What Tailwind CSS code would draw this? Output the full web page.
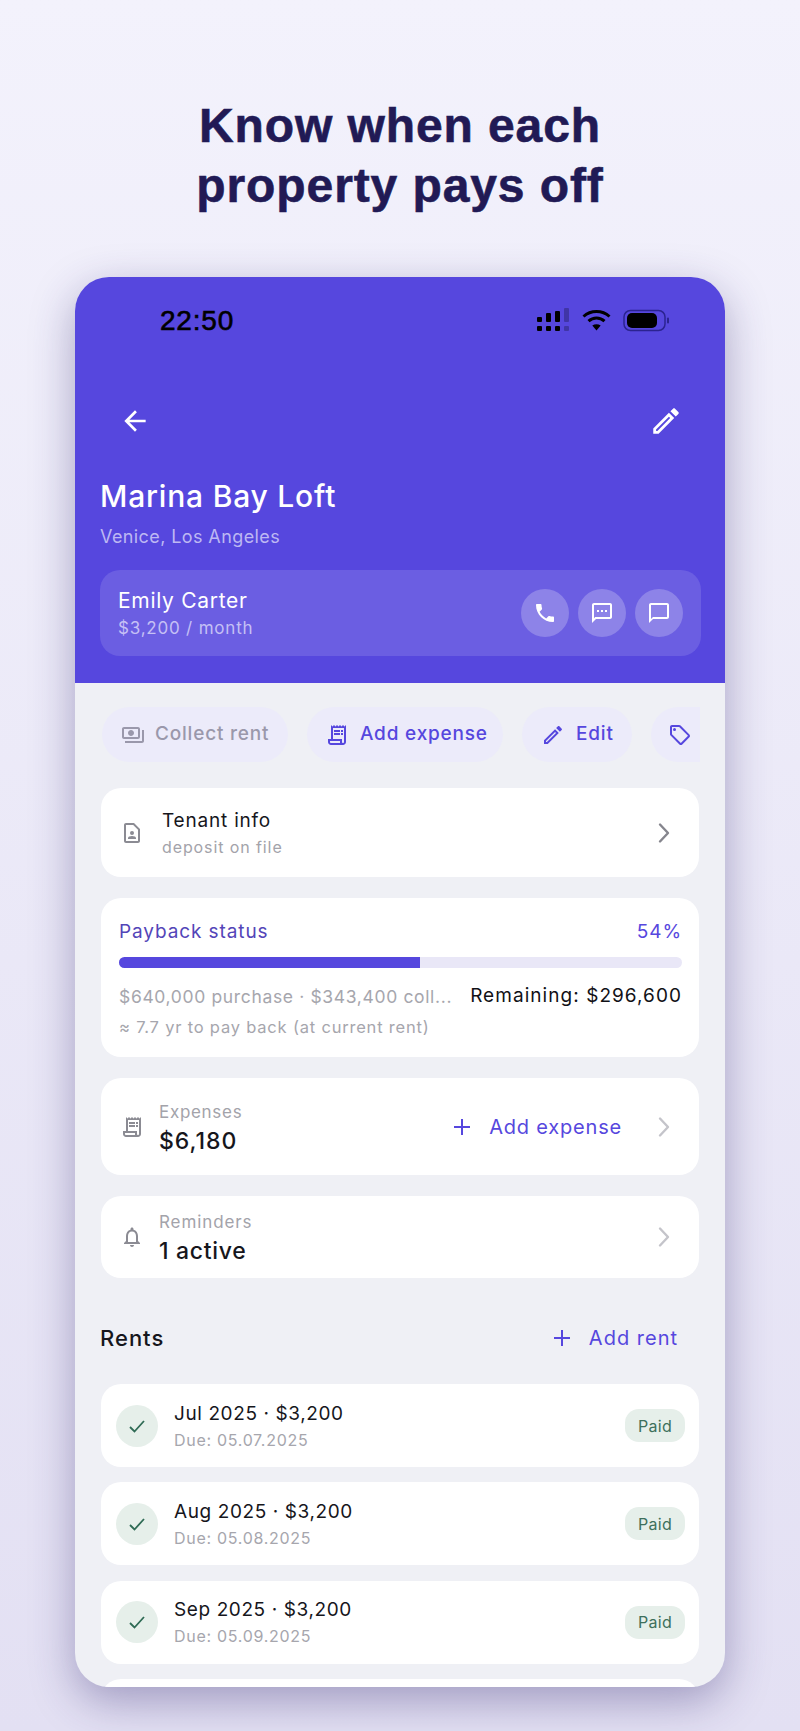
<!DOCTYPE html>
<html><head><meta charset="utf-8"><script src="https://cdn.jsdelivr.net/npm/@tailwindcss/browser@4"></script></head>
<body class="m-0">
<div class="w-[800px] h-[1731px] overflow-hidden bg-gradient-to-b from-[#f3f2fc] to-[#e3e0f3] flex flex-col items-center font-['Inter',sans-serif]">
  <h1 class="mt-[96px] h-[121px] text-center font-['Liberation_Sans',sans-serif] font-bold text-[48px] leading-[60px] tracking-[0.9px] text-[#211a55] [-webkit-text-stroke:0.6px_#211a55]">Know when each<br>property pays off</h1>
  <div class="mt-[60px] w-[650px] h-[1410px] rounded-[34px] overflow-hidden bg-[#eff0f5] shrink-0 shadow-[0_14px_44px_rgba(50,40,110,0.38)] relative z-0">
    <header class="h-[406px] bg-[#5647de] px-[25px] flex flex-col">
      <div class="h-[110px] pt-[28px] flex items-start justify-between pl-[60px] pr-[31px]">
        <span class="font-['Liberation_Sans',sans-serif] text-[28px] leading-[32px] tracking-[0.8px] text-black [-webkit-text-stroke:0.6px_#000]">22:50</span>
        <div class="flex items-center gap-[12px] pt-[3px]">
          <svg width="33" height="24" viewBox="0 0 33 24" fill="#000"><rect x="0" y="9" width="5" height="5" rx="1"/><rect x="9" y="5" width="5" height="9" rx="1"/><rect x="18" y="3" width="5" height="11" rx="1"/><rect x="27" y="0" width="5" height="14" rx="1" opacity=".25"/><rect x="0" y="18" width="5" height="5" rx="1"/><rect x="9" y="18" width="5" height="5" rx="1"/><rect x="18" y="18" width="5" height="5" rx="1"/><rect x="27" y="18" width="5" height="5" rx="1" opacity=".25"/></svg>
          <svg width="29" height="24" viewBox="0 0 29 24" fill="none" stroke="#000" stroke-width="3"><path d="M1.5 8.5C8.8 1.8 20.2 1.8 27.5 8.5"/><path d="M6.5 13.2c4.6-4.2 11.4-4.2 16 0"/><path d="M14.5 22.5l-4.2-5c2.5-1.8 5.9-1.8 8.4 0z" fill="#000" stroke="none"/></svg>
          <svg width="46" height="24" viewBox="0 0 46 24"><rect x="1" y="2.5" width="41" height="20" rx="6.5" fill="none" stroke="#2b2390" stroke-width="1.5"/><rect x="4" y="5" width="30" height="15" rx="5" fill="#000"/><rect x="44" y="9.5" width="2" height="6" rx="1" fill="#2b2390"/></svg>
        </div>
      </div>
      <div class="h-[68px] flex items-center justify-between">
        <svg class="ml-[19px]" width="32" height="32" viewBox="0 0 24 24" fill="#fff"><path d="M20 11H7.83l5.59-5.59L12 4l-8 8 8 8 1.41-1.41L7.83 13H20v-2z"/></svg>
        <svg class="mr-[17px]" width="34" height="34" viewBox="0 0 24 24" fill="#fff"><path d="M3 17.25V21h3.75L17.81 9.94l-3.75-3.75L3 17.25zM5.92 19H5v-.92l9.06-9.06.92.92L5.92 19zM20.71 5.63l-2.34-2.34c-.2-.2-.45-.29-.71-.29s-.51.1-.7.29l-1.83 1.83 3.75 3.75 1.83-1.83c.39-.39.39-1.02 0-1.41z"/></svg>
      </div>
      <div class="mt-[21px] text-[30px] leading-[40px] font-medium text-white tracking-[0.8px]">Marina Bay Loft</div>
      <div class="mt-[9px] text-[18px] leading-[24px] text-[#bdb8f3] tracking-[0.4px]">Venice, Los Angeles</div>
      <div class="mt-[21px] h-[86px] w-[601px] rounded-[20px] bg-[#6b5ee2] flex items-center justify-between pl-[18px] pr-[18px]">
        <div>
          <div class="text-[21px] leading-[28px] text-white tracking-[0.7px]">Emily Carter</div>
          <div class="mt-[2px] text-[17px] leading-[22px] text-[#c5c0f5] tracking-[0.8px]">$3,200 / month</div>
        </div>
        <div class="flex gap-[9px]">
          <div class="w-[48px] h-[48px] rounded-full bg-[#8d83e8] flex items-center justify-center"><svg width="24" height="24" viewBox="0 0 24 24" fill="#fff"><path d="M6.62 10.79c1.44 2.83 3.76 5.14 6.59 6.59l2.2-2.2c.27-.27.67-.36 1.02-.24 1.12.37 2.33.57 3.57.57.55 0 1 .45 1 1V20c0 .55-.45 1-1 1-9.39 0-17-7.61-17-17 0-.55.45-1 1-1h3.5c.55 0 1 .45 1 1 0 1.25.2 2.45.57 3.57.11.35.03.74-.25 1.02l-2.2 2.2z"/></svg></div>
          <div class="w-[48px] h-[48px] rounded-full bg-[#8d83e8] flex items-center justify-center"><svg width="24" height="24" viewBox="0 0 24 24" fill="#fff"><path d="M20 2H4c-1.1 0-1.99.9-1.99 2L2 22l4-4h14c1.1 0 2-.9 2-2V4c0-1.1-.9-2-2-2zm0 14H5.17L4 17.17V4h16v12zM7 9h2v2H7zm4 0h2v2h-2zm4 0h2v2h-2z"/></svg></div>
          <div class="w-[48px] h-[48px] rounded-full bg-[#8d83e8] flex items-center justify-center"><svg width="24" height="24" viewBox="0 0 24 24" fill="#fff"><path d="M20 2H4c-1.1 0-2 .9-2 2v18l4-4h14c1.1 0 2-.9 2-2V4c0-1.1-.9-2-2-2zm0 14H6l-2 2V4h16v12z"/></svg></div>
        </div>
      </div>
    </header>
    <main class="px-[26px] flex flex-col">
      <div class="mt-[24px] h-[55px] ml-[1px] w-[598px] overflow-hidden flex gap-[19px] text-[19px] tracking-[0.8px] font-medium text-[#5647de]">
        <div class="shrink-0 w-[186px] h-full rounded-full bg-[#ecebfa] flex items-center pl-[19px] gap-[10px] text-[#9a98ab]">
          <svg class="w-[24px] h-[24px]" viewBox="0 0 24 24" fill="#9a98ab"><path d="M19 14V6c0-1.1-.9-2-2-2H3c-1.1 0-2 .9-2 2v8c0 1.1.9 2 2 2h14c1.1 0 2-.9 2-2zm-2 0H3V6h14v8zm-7-7c-1.66 0-3 1.34-3 3s1.34 3 3 3 3-1.34 3-3-1.34-3-3-3zm13 0v11c0 1.1-.9 2-2 2H4v-2h17V7h2z"/></svg>Collect rent</div>
        <div class="shrink-0 w-[196px] h-full rounded-full bg-[#ecebfa] flex items-center pl-[18px] gap-[11px]">
          <svg class="w-[24px] h-[24px]" viewBox="0 0 24 24" fill="#5647de"><path d="M19.5 3.5L18 2l-1.5 1.5L15 2l-1.5 1.5L12 2l-1.5 1.5L9 2 7.5 3.5 6 2v14H3v3c0 1.66 1.34 3 3 3h12c1.66 0 3-1.34 3-3V2l-1.5 1.5zM15 20H6c-.55 0-1-.45-1-1v-1h10v2zm4-1c0 .55-.45 1-1 1s-1-.45-1-1v-3H8V5h11v14z"/><path d="M9 7h6v2H9zm7 0h2v2h-2zM9 10h6v2H9zm7 0h2v2h-2z"/></svg>Add expense</div>
        <div class="shrink-0 w-[110px] h-full rounded-full bg-[#ecebfa] flex items-center pl-[19px] gap-[11px]">
          <svg class="w-[24px] h-[24px]" viewBox="0 0 24 24" fill="#5647de"><path d="M3 17.25V21h3.75L17.81 9.94l-3.75-3.75L3 17.25zM5.92 19H5v-.92l9.06-9.06.92.92L5.92 19zM20.71 5.63l-2.34-2.34c-.2-.2-.45-.29-.71-.29s-.51.1-.7.29l-1.83 1.83 3.75 3.75 1.83-1.83c.39-.39.39-1.02 0-1.41z"/></svg>Edit</div>
        <div class="shrink-0 w-[100px] h-full rounded-l-full bg-[#ecebfa] flex items-center pl-[17px]">
          <svg class="w-[24px] h-[24px]" viewBox="0 0 24 24" fill="#5647de"><path d="M21.41 11.41l-8.83-8.83C12.21 2.21 11.7 2 11.17 2H4c-1.1 0-2 .9-2 2v7.17c0 .53.21 1.04.59 1.41l8.83 8.83c.78.78 2.05.78 2.83 0l7.17-7.17c.78-.78.78-2.04-.01-2.83zM12.83 20L4 11.17V4h7.17L20 12.83 12.83 20z"/><circle cx="6.5" cy="6.5" r="1.5"/></svg></div>
      </div>

      <div class="mt-[26px] h-[89px] rounded-[20px] bg-white flex items-center pl-[19px] pr-[28px]">
        <svg class="w-[24px] h-[24px] shrink-0" viewBox="0 0 24 24" fill="#8b8b93"><path d="M14 2H6c-1.1 0-1.99.9-1.99 2L4 20c0 1.1.89 2 1.99 2H18c1.1 0 2-.9 2-2V8l-6-6zM6 20V4h7.17L18 8.83V20H6z"/><circle cx="12" cy="12" r="2"/><path d="M8 18v-.57c0-.81.48-1.53 1.22-1.85C10.07 15.21 11.01 15 12 15s1.93.21 2.78.58c.74.32 1.22 1.04 1.22 1.85V18H8z"/></svg>
        <div class="ml-[18px] flex-1">
          <div class="text-[19px] leading-[26px] text-[#16161c] tracking-[0.8px]">Tenant info</div>
          <div class="mt-[2px] text-[16px] leading-[22px] text-[#a3a3aa] tracking-[0.9px]">deposit on file</div>
        </div>
        <svg width="14" height="22" viewBox="0 0 14 22" fill="none" stroke="#85858d" stroke-width="2.4" stroke-linecap="round" stroke-linejoin="round"><path d="M3 2.5L11 11l-8 8.5"/></svg>
      </div>

      <div class="mt-[21px] h-[159px] rounded-[20px] bg-white pl-[18px] pr-[17px] pt-[21px]">
        <div class="flex justify-between items-center h-[26px] text-[19px] tracking-[0.9px]"><span class="text-[#5345b8]">Payback status</span><span class="text-[#5647de]">54%</span></div>
        <div class="mt-[12px] h-[11px] rounded-full bg-[#e9e7f7] overflow-hidden"><div class="h-full w-[301px] bg-[#5647de]"></div></div>
        <div class="mt-[16px] flex justify-between items-start">
          <span class="mt-[1px] whitespace-nowrap text-[17.5px] leading-[24px] text-[#a6a6ad] tracking-[0.65px]">$640,000 purchase · $343,400 coll...</span>
          <span class="whitespace-nowrap text-[19px] leading-[24px] text-[#111116] tracking-[1.05px]">Remaining: $296,600</span>
        </div>
        <div class="mt-[7px] text-[16.5px] leading-[22px] text-[#a6a6ad] tracking-[0.8px]">≈ 7.7 yr to pay back (at current rent)</div>
      </div>

      <div class="mt-[21px] h-[97px] rounded-[20px] bg-white flex items-center pl-[19px] pr-[28px]">
        <svg class="w-[24px] h-[24px] shrink-0" viewBox="0 0 24 24" fill="#8b8b93"><path d="M19.5 3.5L18 2l-1.5 1.5L15 2l-1.5 1.5L12 2l-1.5 1.5L9 2 7.5 3.5 6 2v14H3v3c0 1.66 1.34 3 3 3h12c1.66 0 3-1.34 3-3V2l-1.5 1.5zM15 20H6c-.55 0-1-.45-1-1v-1h10v2zm4-1c0 .55-.45 1-1 1s-1-.45-1-1v-3H8V5h11v14z"/><path d="M9 7h6v2H9zm7 0h2v2h-2zM9 10h6v2H9zm7 0h2v2h-2z"/></svg>
        <div class="ml-[15px] flex-1 pt-[4px]">
          <div class="text-[17px] leading-[22px] text-[#a3a3aa] tracking-[0.7px]">Expenses</div>
          <div class="mt-[3px] text-[23px] leading-[30px] font-medium text-[#16161c] tracking-[1px]">$6,180</div>
        </div>
        <div class="flex items-center text-[#5647de] text-[20px] tracking-[0.8px]">
          <svg width="20" height="20" viewBox="0 0 20 20" fill="none" stroke="#5647de" stroke-width="2"><path d="M10 2v16M2 10h16"/></svg>
          <span class="ml-[17px] mr-[35px]">Add expense</span>
        </div>
        <svg width="14" height="22" viewBox="0 0 14 22" fill="none" stroke="#c4c4ca" stroke-width="2.4" stroke-linecap="round" stroke-linejoin="round"><path d="M3 2.5L11 11l-8 8.5"/></svg>
      </div>

      <div class="mt-[21px] h-[82px] rounded-[20px] bg-white flex items-center pl-[19px] pr-[28px]">
        <svg class="w-[24px] h-[24px] shrink-0" viewBox="0 0 24 24" fill="#8b8b93"><path d="M12 22c1.1 0 2-.9 2-2h-4c0 1.1.9 2 2 2zm6-6v-5c0-3.07-1.63-5.64-4.5-6.32V4c0-.83-.67-1.5-1.5-1.5s-1.5.67-1.5 1.5v.68C7.64 5.36 6 7.92 6 11v5l-2 2v1h16v-1l-2-2zm-2 1H8v-6c0-2.48 1.51-4.5 4-4.5s4 2.02 4 4.5v6z"/></svg>
        <div class="ml-[15px] flex-1 pt-[3px]">
          <div class="text-[17px] leading-[22px] text-[#a3a3aa] tracking-[0.9px]">Reminders</div>
          <div class="mt-[3px] text-[23px] leading-[30px] font-medium text-[#16161c] tracking-[0.7px]">1 active</div>
        </div>
        <svg width="14" height="22" viewBox="0 0 14 22" fill="none" stroke="#c4c4ca" stroke-width="2.4" stroke-linecap="round" stroke-linejoin="round"><path d="M3 2.5L11 11l-8 8.5"/></svg>
      </div>

      <div class="mt-[44px] h-[32px] flex items-center ml-[-1px]">
        <span class="flex-1 text-[22px] font-medium text-[#16161c] tracking-[1px]">Rents</span>
        <svg width="20" height="20" viewBox="0 0 20 20" fill="none" stroke="#5647de" stroke-width="2"><path d="M10 2v16M2 10h16"/></svg>
        <span class="ml-[17px] mr-[21px] text-[20px] text-[#5647de] tracking-[1px]">Add rent</span>
      </div>

      <div class="mt-[30px] flex flex-col gap-[15.33px]">
        <div class="h-[83px] shrink-0 rounded-[20px] bg-white flex items-center pl-[15px] pr-[14px]">
          <div class="w-[42px] h-[42px] rounded-full bg-[#e6efea] flex items-center justify-center"><svg width="24" height="24" viewBox="0 0 24 24" fill="none" stroke="#2f6b55" stroke-width="1.8"><path d="M5 13l4.5 4.5L19 7"/></svg></div>
          <div class="ml-[16px] flex-1">
            <div class="text-[19px] leading-[26px] text-[#16161c] tracking-[0.6px]">Jul 2025 · $3,200</div>
            <div class="mt-[2px] text-[16px] leading-[22px] text-[#a6a6ad] tracking-[0.7px]">Due: 05.07.2025</div>
          </div>
          <span class="w-[60px] h-[33px] rounded-[14px] bg-[#e6efea] flex items-center justify-center text-[16px] text-[#3e705c] tracking-[0.3px]">Paid</span>
        </div>
        <div class="h-[83px] shrink-0 rounded-[20px] bg-white flex items-center pl-[15px] pr-[14px]">
          <div class="w-[42px] h-[42px] rounded-full bg-[#e6efea] flex items-center justify-center"><svg width="24" height="24" viewBox="0 0 24 24" fill="none" stroke="#2f6b55" stroke-width="1.8"><path d="M5 13l4.5 4.5L19 7"/></svg></div>
          <div class="ml-[16px] flex-1">
            <div class="text-[19px] leading-[26px] text-[#16161c] tracking-[0.6px]">Aug 2025 · $3,200</div>
            <div class="mt-[2px] text-[16px] leading-[22px] text-[#a6a6ad] tracking-[0.7px]">Due: 05.08.2025</div>
          </div>
          <span class="w-[60px] h-[33px] rounded-[14px] bg-[#e6efea] flex items-center justify-center text-[16px] text-[#3e705c] tracking-[0.3px]">Paid</span>
        </div>
        <div class="h-[83px] shrink-0 rounded-[20px] bg-white flex items-center pl-[15px] pr-[14px]">
          <div class="w-[42px] h-[42px] rounded-full bg-[#e6efea] flex items-center justify-center"><svg width="24" height="24" viewBox="0 0 24 24" fill="none" stroke="#2f6b55" stroke-width="1.8"><path d="M5 13l4.5 4.5L19 7"/></svg></div>
          <div class="ml-[16px] flex-1">
            <div class="text-[19px] leading-[26px] text-[#16161c] tracking-[0.6px]">Sep 2025 · $3,200</div>
            <div class="mt-[2px] text-[16px] leading-[22px] text-[#a6a6ad] tracking-[0.7px]">Due: 05.09.2025</div>
          </div>
          <span class="w-[60px] h-[33px] rounded-[14px] bg-[#e6efea] flex items-center justify-center text-[16px] text-[#3e705c] tracking-[0.3px]">Paid</span>
        </div>
        <div class="h-[83px] shrink-0 rounded-[20px] bg-white"></div>
      </div>
    </main>
  </div>
</div>
</body></html>
